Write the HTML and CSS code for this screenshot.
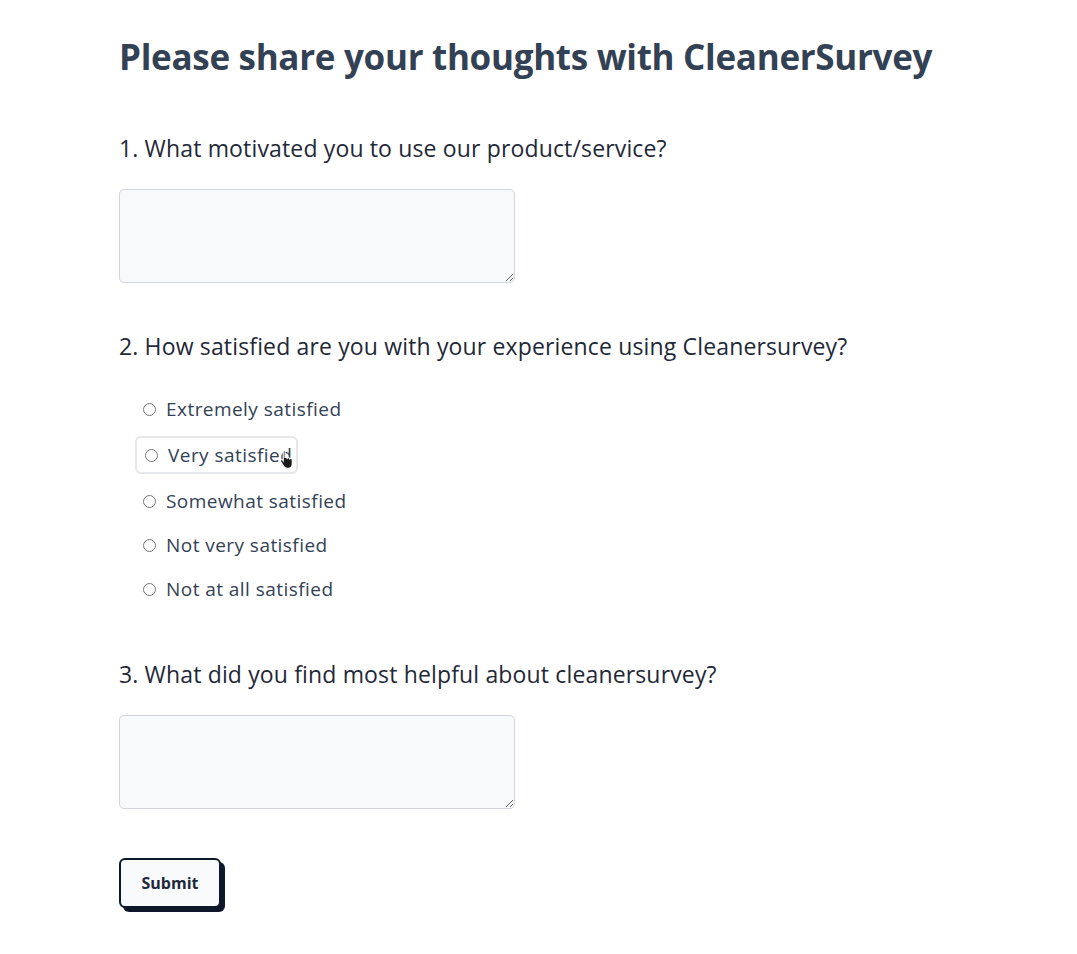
FILE: index.html
```html
<!DOCTYPE html>
<html lang="en">
<head>
<meta charset="utf-8">
<title>CleanerSurvey</title>
<link rel="stylesheet" href="styles.css">
</head>
<body>
<main class="survey">
  <h1 class="title">Please share your thoughts with CleanerSurvey</h1>
  <form class="form">
    <section class="question">
      <label class="q-label" for="q1">1. What motivated you to use our product/service?</label>
      <textarea id="q1" class="answer"></textarea>
    </section>
    <section class="question">
      <p class="q-label">2. How satisfied are you with your experience using Cleanersurvey?</p>
      <div class="options">
        <label class="option"><input type="radio" name="sat"><span>Extremely satisfied</span></label>
        <label class="option hovered"><input type="radio" name="sat"><span>Very satisfied</span><svg class="cursor" width="16" height="21" viewBox="0 0 14 18"><path d="M4 1.5c.8 0 1.3.6 1.3 1.3v5.2l.6-.1c.7 0 1.2.4 1.3.9.2-.3.6-.5 1-.5.6 0 1.1.4 1.2.9.2-.2.5-.3.9-.3.8 0 1.3.6 1.3 1.3v3.6c0 2-1.6 3.7-3.6 3.7H7.2c-1.2 0-2.3-.6-3-1.6L1.4 11.7c-.4-.6-.2-1.3.4-1.6.5-.3 1.1-.1 1.5.3l.4.6V2.8c0-.7.6-1.3 1.3-1.3z" fill="#1a1a1a" stroke="#fff" stroke-width="1"/></svg></label>
        <label class="option"><input type="radio" name="sat"><span>Somewhat satisfied</span></label>
        <label class="option"><input type="radio" name="sat"><span>Not very satisfied</span></label>
        <label class="option"><input type="radio" name="sat"><span>Not at all satisfied</span></label>
      </div>
    </section>
    <section class="question">
      <label class="q-label" for="q3">3. What did you find most helpful about cleanersurvey?</label>
      <textarea id="q3" class="answer"></textarea>
    </section>
    <div class="actions">
      <button type="button" class="submit">Submit</button>
    </div>
  </form>
</main>
</body>
</html>
```
FILE: styles.css
```css
* { box-sizing: border-box; }
html, body { margin: 0; padding: 0; background: #fff; }
body {
  font-family: "Open Sans", "Noto Sans", sans-serif;
  color: #1f2937;
}
.survey {
  padding: 32px 0 40px 119px;
}
.title {
  margin: 0;
  font-size: 35px;
  line-height: 50px;
  font-weight: 700;
  color: #334155;
  letter-spacing: -0.3px;
}
.form {
  display: flex;
  flex-direction: column;
  margin-top: 50px;
}
.question {
  display: flex;
  flex-direction: column;
  margin-bottom: 47px;
}
.q-label {
  display: block;
  margin: 0;
  font-size: 23px;
  line-height: 32px;
  color: #1f2937;
  letter-spacing: 0.15px;
}
.answer {
  margin-top: 25px;
  width: 396px;
  height: 94px;
  border: 1px solid #d1d5db;
  border-radius: 5px;
  background: #f8f9fb;
  resize: vertical;
  font: inherit;
}
.options {
  display: flex;
  flex-direction: column;
  margin-top: 25px;
  padding-left: 18px;
}
.option {
  position: relative;
  display: flex;
  align-items: center;
  gap: 10px;
  width: fit-content;
  height: 44px;
  padding: 0 6px;
  font-size: 19px;
  color: #334155;
  letter-spacing: 0.45px;
}
.option input {
  margin: 0;
  width: 13px;
  height: 13px;
}
.option.hovered {
  height: 48px;
  margin-left: -2px;
  padding: 0 6px 0 10px;
}
.option.hovered::after {
  content: "";
  position: absolute;
  left: 0;
  right: 0;
  top: 5px;
  bottom: 5px;
  border: 2px solid #e5e7eb;
  border-radius: 6px;
}
.cursor {
  position: absolute;
  right: 3px;
  top: 17px;
}
.actions {
  display: flex;
  margin-top: 2px;
}
.submit {
  width: 102px;
  height: 50px;
  border: 2px solid #0f172a;
  border-radius: 6px;
  background: #f8fafc;
  box-shadow: 4px 4px 0 #0f172a;
  font-family: inherit;
  font-size: 16px;
  font-weight: 700;
  color: #1e293b;
}
```
